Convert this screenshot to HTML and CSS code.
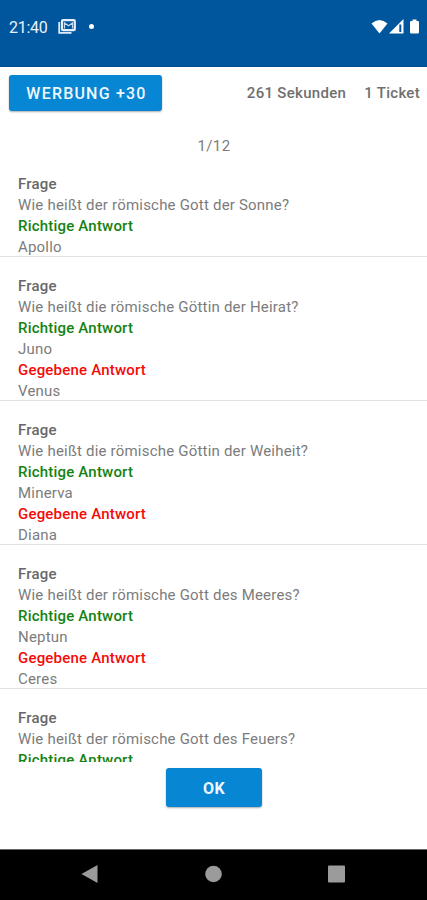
FILE: index.html
```html
<!DOCTYPE html>
<html lang="de">
<head>
<meta charset="utf-8">
<title>Quiz</title>
<link rel="stylesheet" href="styles.css">
</head>
<body>
<header class="status">
  <span class="clock">21:40</span>
  <svg class="mail" width="18" height="15" viewBox="0 0 18 15"><path d="M1.200 3v10.800h12.300" fill="none" stroke="#dfeafa" stroke-width="1.800"/><rect x="4" y="1.200" width="12.800" height="10" rx="1" fill="#00569d" stroke="#e6effb" stroke-width="2.200"/><path d="M6.500 9.500V4l4 2.800 4-2.800v5.500" fill="none" stroke="#c5d8ef" stroke-width="1.200"/></svg>
  <span class="dot"></span>
  <svg class="signals" width="50" height="16" viewBox="0 0 50 16"><path d="M.5 4.500Q8.500-2.500 16.500 4.500L8.500 14.500Z" fill="#fff"/><path d="M18 14.500L32.500 0V14.500Z" fill="#fff"/><path d="M28.300 5.500h2v7.500h-2z" fill="#00569d"/><path d="M39 3.200q0-1.200 1.200-1.200h1.300V.5h4V2h1.300q1.200 0 1.200 1.200v10q0 1.300-1.200 1.300h-6.600q-1.200 0-1.200-1.300z" fill="#fff"/></svg>
</header>
<section class="toolbar">
  <button class="btn ad">WERBUNG +30</button>
  <span class="seconds">261 Sekunden</span>
  <span class="ticket">1 Ticket</span>
</section>
<p class="score">1/12</p>
<main class="list">
  <article><h2>Frage</h2><p>Wie heißt der römische Gott der Sonne?</p><h2 class="right">Richtige Antwort</h2><p>Apollo</p></article>
  <article><h2>Frage</h2><p>Wie heißt die römische Göttin der Heirat?</p><h2 class="right">Richtige Antwort</h2><p>Juno</p><h2 class="given">Gegebene Antwort</h2><p>Venus</p></article>
  <article><h2>Frage</h2><p>Wie heißt die römische Göttin der Weiheit?</p><h2 class="right">Richtige Antwort</h2><p>Minerva</p><h2 class="given">Gegebene Antwort</h2><p>Diana</p></article>
  <article><h2>Frage</h2><p>Wie heißt der römische Gott des Meeres?</p><h2 class="right">Richtige Antwort</h2><p>Neptun</p><h2 class="given">Gegebene Antwort</h2><p>Ceres</p></article>
  <article><h2>Frage</h2><p>Wie heißt der römische Gott des Feuers?</p><h2 class="right">Richtige Antwort</h2></article>
</main>
<footer class="actions"><button class="btn ok">OK</button></footer>
<nav class="nav">
  <svg width="17" height="20" viewBox="0 0 17 20"><path d="M.5 10L16.500 1v18z" fill="#9b9b9b"/></svg>
  <svg width="17" height="20" viewBox="0 0 17 20"><circle cx="8.500" cy="10" r="8.300" fill="#9b9b9b"/></svg>
  <svg width="17" height="20" viewBox="0 0 17 20"><rect y="1.500" width="17" height="17" rx="1" fill="#9b9b9b"/></svg>
</nav>
</body>
</html>
```
FILE: styles.css
```css
* { box-sizing: border-box; margin: 0; padding: 0; }
body {
  width: 427px;
  height: 900px;
  display: flex;
  flex-direction: column;
  overflow: hidden;
  background: #fff;
  color: #7c7c7c;
  font-family: Roboto, sans-serif;
  font-size: 15px;
}
.status {
  height: 67px;
  flex: none;
  display: flex;
  align-items: flex-start;
  padding: 19px 6px 0 9px;
  background: #00569d;
  border-bottom: 1px solid #004b91;
  color: #e9f1fb;
}
.clock { width: 49px; font-size: 16px; line-height: 18px; letter-spacing: -0.3px; }
.dot { width: 5px; height: 5px; margin: 5px 0 0 13px; border-radius: 50%; background: #fff; }
.signals { margin: 0 0 0 auto; }
.toolbar {
  height: 52px;
  flex: none;
  display: flex;
  align-items: center;
  padding: 0 7px 0 9px;
  color: #6f6f6f;
  font-weight: 500;
  letter-spacing: .3px;
}
.btn {
  border: 0;
  border-radius: 3px;
  background: #0786d3;
  color: #eef8ff;
  font: 700 16px Roboto, sans-serif;
  box-shadow: 0 1px 2px #0005;
}
.ad { width: 153px; height: 36px; padding-left: 2px; font-weight: 500; letter-spacing: 1.2px; }
.seconds { margin-left: auto; }
.ticket { margin-left: 18px; }
.score {
  height: 36px;
  flex: none;
  padding: 17px 0 0 1px;
  line-height: 21px;
  text-align: center;
  letter-spacing: .4px;
}
.list { height: 607px; flex: none; overflow: hidden; }
article {
  display: flow-root;
  padding: 19px 18px 0;
  line-height: 21px;
  letter-spacing: .2px;
  box-shadow: inset 0 -1px #e2e2e2;
}
article > :last-child { margin-bottom: -1px; }
article h2 { font-size: 15px; font-weight: 500; color: #686868; }
article .right { color: #16820f; }
article .given { color: #f50a0a; }
.actions { height: 87px; flex: none; padding-top: 6px; text-align: center; }
.ok { width: 96px; height: 39px; padding: 1px 0 0 1px; letter-spacing: .4px; }
.nav {
  flex: 1;
  display: flex;
  justify-content: space-between;
  padding: 14px 82px 0 81px;
  background: #000;
  border-top: 1px solid #666;
}
```
